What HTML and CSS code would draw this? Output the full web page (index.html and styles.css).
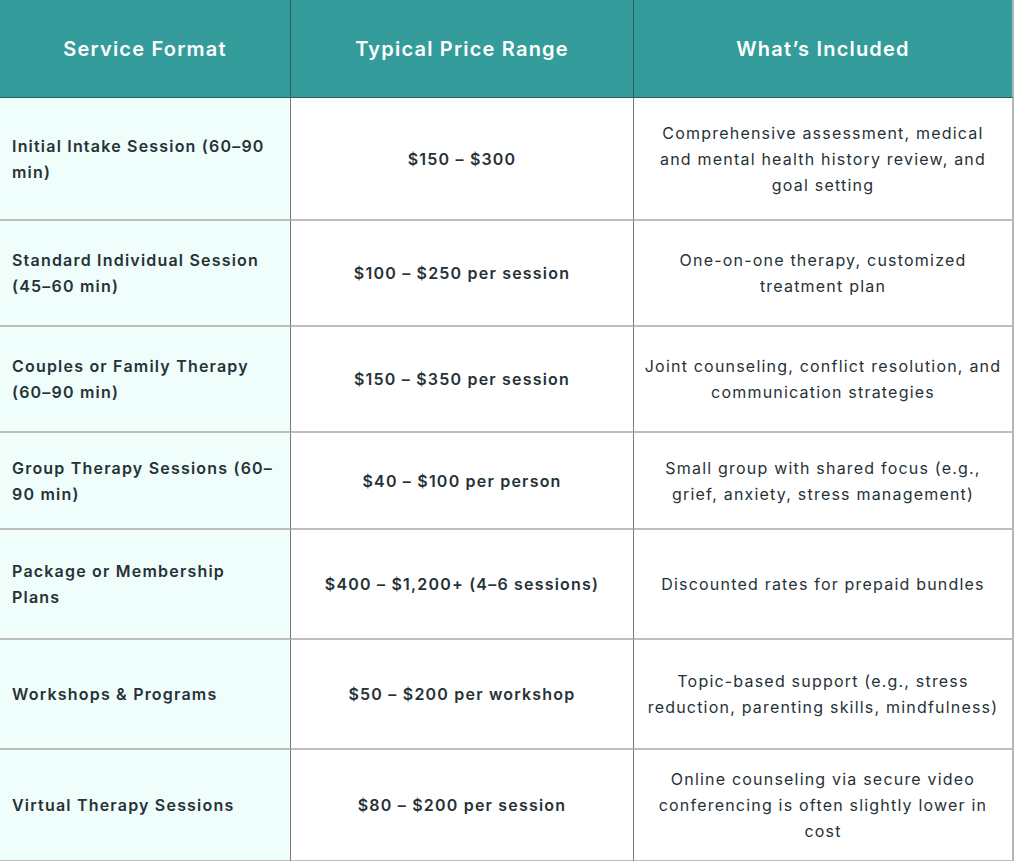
FILE: index.html
```html
<!DOCTYPE html>
<html lang="en">
<head>
<meta charset="utf-8">
<title>Therapy Pricing</title>
<link rel="stylesheet" href="styles.css">
</head>
<body>
<table class="pricing">
  <thead>
    <tr class="head-row">
      <th class="c1">Service Format</th>
      <th class="c2">Typical Price Range</th>
      <th class="c3">What’s Included</th>
    </tr>
  </thead>
  <tbody>
    <tr class="r1">
      <td class="c1">Initial Intake Session (60–90 min)</td>
      <td class="c2">$150 – $300</td>
      <td class="c3">Comprehensive assessment, medical and mental health history review, and goal setting</td>
    </tr>
    <tr class="r2">
      <td class="c1">Standard Individual Session (45–60 min)</td>
      <td class="c2">$100 – $250 per session</td>
      <td class="c3">One-on-one therapy, customized treatment plan</td>
    </tr>
    <tr class="r3">
      <td class="c1">Couples or Family Therapy (60–90 min)</td>
      <td class="c2">$150 – $350 per session</td>
      <td class="c3">Joint counseling, conflict resolution, and communication strategies</td>
    </tr>
    <tr class="r4">
      <td class="c1">Group Therapy Sessions (60–90 min)</td>
      <td class="c2">$40 – $100 per person</td>
      <td class="c3">Small group with shared focus (e.g., grief, anxiety, stress management)</td>
    </tr>
    <tr class="r5">
      <td class="c1">Package or Membership Plans</td>
      <td class="c2">$400 – $1,200+ (4–6 sessions)</td>
      <td class="c3">Discounted rates for prepaid bundles</td>
    </tr>
    <tr class="r6">
      <td class="c1">Workshops &amp; Programs</td>
      <td class="c2">$50 – $200 per workshop</td>
      <td class="c3">Topic-based support (e.g., stress reduction, parenting skills, mindfulness)</td>
    </tr>
    <tr class="r7">
      <td class="c1">Virtual Therapy Sessions</td>
      <td class="c2">$80 – $200 per session</td>
      <td class="c3">Online counseling via secure video conferencing is often slightly lower in cost</td>
    </tr>
  </tbody>
</table>
</body>
</html>
```

FILE: styles.css
```css
html, body {
  margin: 0;
  padding: 0;
  background: #ffffff;
}

.pricing {
  width: 1014px;
  table-layout: fixed;
  border-collapse: separate;
  border-spacing: 0;
  font-family: "Inter", "Liberation Sans", sans-serif;
  color: #263238;
  font-size: 16px;
  line-height: 26px;
  letter-spacing: 1.2px;
}

.pricing th,
.pricing td {
  padding: 0 12px;
  vertical-align: middle;
  border-right: 1px solid #7a7a7a;
  border-bottom: 2px solid #bdbdbd;
}

.pricing th.c3,
.pricing td.c3 {
  border-right: 2px solid #b5b5b5;
}

.pricing .c1 { width: 266px; }
.pricing .c2 { width: 318px; }

.head-row th {
  background: #359c9c;
  color: #ffffff;
  font-weight: 600;
  font-size: 20px;
  letter-spacing: 1.2px;
  height: 97px;
  text-align: center;
  border-bottom: 1px solid #24605f;
  border-right-color: #2b5f5e;
}

.pricing td.c1 {
  background: #effdfb;
  font-weight: 560;
  text-align: left;
}

.pricing td.c2 {
  font-weight: 560;
  text-align: center;
}

.pricing td.c3 {
  font-weight: 400;
  text-align: center;
  padding: 0 10px;
}

.r1 td { height: 121px; }
.r2 td { height: 104px; }
.r3 td { height: 104px; }
.r4 td { height: 95px; }
.r5 td { height: 108px; }
.r6 td { height: 108px; }
.r7 td { height: 110px; }
```
